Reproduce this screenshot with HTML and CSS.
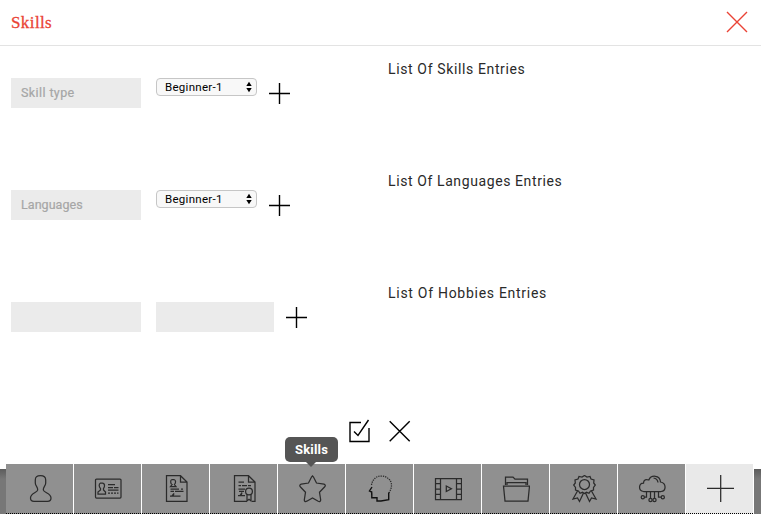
FILE: index.html
```html
<!DOCTYPE html>
<html lang="en">
<head>
<meta charset="utf-8">
<title>Skills</title>
<link rel="stylesheet" href="styles.css">
</head>
<body>
<header class="header">
  <h1 class="title">Skills</h1>
  <svg class="close" viewBox="0 0 22 22"><path d="M1 1L21 21M21 1L1 21"/></svg>
</header>
<main class="main">
  <section class="row">
    <div class="fields">
      <div class="field"><span class="skill-label">Skill type</span></div>
      <div class="select"><span>Beginner-1</span><svg class="arrows" viewBox="0 0 6 12"><path d="M0.3 5L3 .8L5.7 5ZM.3 7L3 11.2L5.7 7Z"/></svg></div>
      <svg class="plus" viewBox="0 0 22 22"><path d="M10.5 0V21M0 10.5H21"/></svg>
    </div>
    <h2 class="list skills">List Of Skills Entries</h2>
  </section>
  <section class="row">
    <div class="fields">
      <div class="field"><span class="language-label">Languages</span></div>
      <div class="select"><span>Beginner-1</span><svg class="arrows" viewBox="0 0 6 12"><path d="M0.3 5L3 .8L5.7 5ZM.3 7L3 11.2L5.7 7Z"/></svg></div>
      <svg class="plus" viewBox="0 0 22 22"><path d="M10.5 0V21M0 10.5H21"/></svg>
    </div>
    <h2 class="list languages">List Of Languages Entries</h2>
  </section>
  <section class="row">
    <div class="fields">
      <div class="field"></div>
      <div class="field short"></div>
      <svg class="plus" viewBox="0 0 22 22"><path d="M10.5 0V21M0 10.5H21"/></svg>
    </div>
    <h2 class="list hobbies">List Of Hobbies Entries</h2>
  </section>
</main>
<div class="actions">
  <svg class="action" viewBox="0 0 22 24"><path d="M12 3.5H1V22.5H20V9M5 12.5L9 16.5L19.5 1"/></svg>
  <svg class="action cancel" viewBox="0 0 22 24"><path d="M.7 2.3L20.7 22.3M20.7 2.3L.7 22.3"/></svg>
</div>
<nav class="nav">
  <div class="edge left"></div>
  <div class="tab"><svg class="icon" viewBox="0 0 28 28"><path d="M14.5.7C10.5.7 9.3 2 9.3 5V8C9.3 11 12 12 11.7 15C11.2 18 4.5 18 4.5 23Q4.5 26.3 8 26.3H21.5Q25 26.3 25 23C25 18 17.8 18 17.3 15C17 12 19.7 11 19.7 8V5C19.7 2 18.5.7 14.5.7Z"/></svg></div>
  <div class="tab"><svg class="icon" viewBox="0 0 28 28"><rect x="1.5" y="4" width="25.5" height="19" rx="1"/><path d="M6.5 8C4.5 9 5 12 6.5 13.5V15L4 17V19H11.5V17L9.5 15V13.5C11 12 11 8 8.5 8Z"/><path d="M14 9.5H21M14 12.5H19M20 12.5H24.5M14 15H24.5"/><path d="M14 18H24.5" stroke-dasharray="2 1"/></svg></div>
  <div class="tab"><svg class="icon" viewBox="0 0 28 28"><path d="M4.5.7H18.5L25 7V26.3H4.5ZM18.5.7V7H25"/><path d="M10 4.5C8 5 8.5 9 10 9.5L8.5 11.5H14L12.5 9.5C14 8 14 5 12 4.5Z"/><path d="M8.5 14H17M19 14H21M8.5 16.3H12M13 16.3H21.5M8 21H10L12 18.5L11 21H18.5"/></svg></div>
  <div class="tab"><svg class="icon" viewBox="0 0 28 28"><path d="M17 26.3H4.5V.7H18.5L25 7V26.3H22M18.5.7V7H25"/><path d="M8.5 7H14M8.5 10.5H11M12 10.5H17M18 10.5H21M8.5 14H15M8 20.5H10L12 17.5L11 20.5H15M9 16.3H14"/><circle cx="19" cy="16.5" r="3.4"/><path d="M17 19.5V26L19 24.3L21 26V19.5"/></svg></div>
  <div class="tab"><svg class="icon star" viewBox="0 0 28 28"><path d="M14.5 .9L15.5 2L18.5 8L26 9.2Q28.3 10 26.5 12L21.5 17.3L22.7 25Q22.5 27.2 20.2 26.2L14.5 23L8.8 26.2Q6.3 27.2 6.3 25L7.5 17.3L2.5 12Q.8 10 3.2 9.2L10.5 8L13.5 2Z"/></svg><span class="tip">Skills</span></div>
  <div class="tab"><svg class="icon" viewBox="0 0 28 28"><path class="dots" d="M5.5 10C6.5 4 10.5 1 15 1C21 1 25.5 5 25.5 10C25.5 13 24.5 15.5 23 18"/><path class="face" d="M6 12L3.5 16L5.7 17V19H5.8V22.7H11V26H15L22.7 24.7V17.5"/></svg></div>
  <div class="tab"><svg class="icon" viewBox="0 0 28 28"><path d="M1.5 3.5H27.5V24.5H1.5ZM6.5 3.5V24.5M22.5 3.5V24.5M1.5 8.7H6.5M1.5 14H6.5M1.5 19.3H6.5M22.5 8.7H27.5M22.5 14H27.5M22.5 19.3H27.5M12.3 11L17.4 13.7L12.3 16.5Z"/></svg></div>
  <div class="tab"><svg class="icon" viewBox="0 0 28 28"><path d="M1.5 11H27.5L26 26H3ZM3.5 10V2H11L13 4.2H25.5V10M5 10V7.5H24V10"/></svg></div>
  <div class="tab"><svg class="icon" viewBox="0 0 28 28"><path d="M14.5.5L17 2L20 1.5L21 4L24 5L23.7 8L25.3 10L23.5 12.5L23.5 15L20.5 16L19 18.3L16.5 17.3L14.5 18.5L12.5 17.3L10 18.3L8.5 16L5.5 15L5.5 12.5L3.7 10L5.3 8L5 5L8 4L9 1.5L12 2Z"/><circle cx="14.5" cy="9.5" r="5"/><path d="M7.5 16L3 24L7.5 23L9.5 26.5L13.5 18M21.5 16L26 24L21.5 23L19.5 26.5L15.5 18"/></svg></div>
  <div class="tab"><svg class="icon" viewBox="0 0 28 28"><path d="M5.5 16.5C0 16 .5 8 5.5 8C5.5 4.5 8.3 4 10.8 5C13-.3 22-.3 22.5 7C28.5 8 28.5 16 23 16.5ZM15.5 3Q19.5 3.5 20 7.5M8.5 17V22H6.5M12.5 17V23.5M16.5 17V23.5M20.5 17V22H23"/><circle cx="4.8" cy="22.3" r="1.6"/><circle cx="12.5" cy="25" r="1.6"/><circle cx="16.5" cy="25" r="1.6"/><circle cx="24.8" cy="22.3" r="1.6"/></svg></div>
  <div class="tab add"><svg class="icon" viewBox="0 0 28 28"><path d="M14.7 0V27M1 13.3H28"/></svg></div>
  <div class="edge right"></div>
</nav>
</body>
</html>
```
FILE: styles.css
```css
* { box-sizing: border-box; }
body {
  margin: 0;
  width: 761px;
  height: 514px;
  overflow: hidden;
  display: flex;
  flex-direction: column;
  background: #fff;
  font-family: Roboto, "Liberation Sans", sans-serif;
}
svg { display: block; flex: none; fill: none; stroke: #000; }
.header {
  flex: none;
  display: flex;
  justify-content: space-between;
  height: 46px;
  padding: 11px 13px 0 11px;
  border-bottom: 1px solid #e3e3e3;
}
.title {
  margin: 0;
  padding-top: 1px;
  font: 400 17px/22px "Liberation Serif", serif;
  letter-spacing: .4px;
  color: #ea4335;
  -webkit-text-stroke: .3px #ea4335;
}
.close { width: 22px; height: 22px; stroke: #ea4335; stroke-width: 1.4; }
.main { flex: none; padding: 14px 11px 0; height: 373px; }
.row { display: grid; grid-template-columns: 377px 1fr; height: 112px; }
.fields { display: flex; align-items: flex-start; padding-top: 18px; }
.field {
  width: 130px;
  height: 30px;
  margin-right: 15px;
  padding-left: 10px;
  background: #ebebeb;
  color: #a6a6a6;
  font-size: 12.5px;
  line-height: 30px;
  -webkit-text-stroke: .2px #a6a6a6;
}
.short { width: 118px; margin-right: 12px; }
.skill-label { letter-spacing: .4px; }
.language-label { letter-spacing: .05px; }
.select {
  display: flex;
  justify-content: space-between;
  align-items: center;
  width: 101px;
  height: 18px;
  margin-right: 12px;
  padding: 0 4px 0 8px;
  border: 1px solid #c6c6c6;
  border-radius: 4px;
  background: #f8f8f8;
  color: #000;
  font-size: 11.5px;
  letter-spacing: .28px;
}
.arrows { width: 6px; height: 12px; fill: #000; stroke: none; }
.plus { width: 22px; height: 22px; margin-top: 5px; stroke-width: 1.4; }
.list {
  margin: -1px 0 0;
  color: #2a2a2a;
  font-size: 14px;
  font-weight: 400;
  line-height: 20px;
  white-space: nowrap;
}
.skills { letter-spacing: .63px; }
.languages { letter-spacing: .6px; }
.hobbies { letter-spacing: .72px; }
.actions { flex: none; display: flex; gap: 18px; height: 45px; padding-left: 349px; }
.action { width: 22px; height: 24px; stroke-width: 1.4; }
.nav { flex: none; display: flex; height: 50px; }
.edge { height: 45px; margin-top: 5px; background: linear-gradient(#5c5c5c, #777 10px); }
.left { width: 6px; margin-right: 0; }
.right { flex: 1; }
.tab {
  position: relative;
  width: 67px;
  height: 50px;
  margin-right: 1px;
  padding: 11px 0 0 20px;
  background: #909090;
  border-bottom: 1px dotted #000;
}
.add { background: #e9e9e9; }
.icon { width: 28px; height: 28px; stroke: #2b2b2b; stroke-width: 1.25; }
.dots { stroke-dasharray: 1.3 1; }
.face { stroke: #111; stroke-width: 1.4; }
.tip {
  position: absolute;
  left: 7px;
  top: -27px;
  width: 53px;
  height: 25px;
  border-radius: 5px;
  background: #555;
  color: #fff;
  font-size: 13px;
  font-weight: 700;
  line-height: 25px;
  letter-spacing: .2px;
  text-align: center;
}
.tip::after {
  content: "";
  position: absolute;
  left: 21px;
  top: 25px;
  border: 5px solid transparent;
  border-top-color: #555;
  border-bottom: 0;
}
```
